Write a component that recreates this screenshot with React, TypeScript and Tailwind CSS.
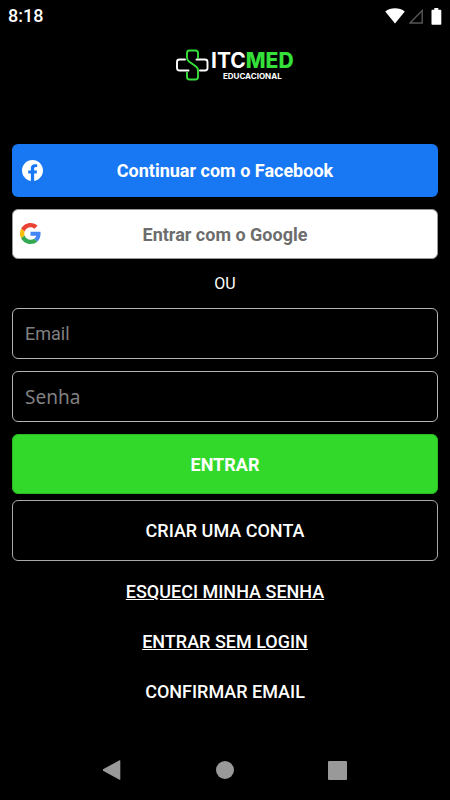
import React from "react";

const fieldClass =
  "block w-full h-[51px] rounded-md border border-[#b4b4b4] bg-black px-3 text-white outline-none placeholder:text-[#808080] placeholder:opacity-100";

function StatusBar() {
  return (
    <div className="flex h-8 items-center justify-between px-2">
      <span className="text-lg leading-8 font-medium">8:18</span>
      <div className="flex items-center">
        <svg width="20" height="16" viewBox="0 0 20 16" fill="#fff" aria-hidden="true">
          <path d="M10 15.5 0.2 3.6C5.5-0.8 14.500-0.8 19.800 3.600Z" />
        </svg>
        <svg className="ml-1" width="14" height="15" viewBox="0 0 14 15" fill="none" stroke="#555" strokeWidth="1.400" aria-hidden="true">
          <path d="M13.200 1.500V14H1Z" />
        </svg>
        <svg className="ml-2" width="11" height="17" viewBox="0 0 11 17" fill="#fff" aria-hidden="true">
          <path d="M3.300 0h4v1.800H9.500q.8 0 .8.8V16q0 .8-.8.8H1.300q-.8 0-.8-.8V2.600q0-.8.800-.8h2Z" />
        </svg>
      </div>
    </div>
  );
}

function Logo() {
  return (
    <div className="flex h-8 w-[120px] items-center gap-[2px] font-['Inter',sans-serif]">
      <svg className="shrink-0" width="34" height="32" viewBox="0 0 34 32" fill="none" strokeWidth="1.900" strokeLinecap="round" strokeLinejoin="round" aria-hidden="true">
        <path stroke="#fff" d="M10 10.500H4.500Q2 10.500 2 13V19Q2 21.500 4.500 21.500H13.500" />
        <path stroke="#fff" d="M21.500 10.500H30Q32.500 10.500 32.500 13V19Q32.500 21.500 30 21.500H25" />
        <path stroke="#35e03a" d="M23 9V4Q23 1.500 20.500 1.500H14.500Q12 1.500 12 4V8.500Q12 11 14 12.500L21 17.500Q23 19 23 21.500V28Q23 30.500 20.500 30.500H14.500Q12 30.500 12 28V23.500" />
      </svg>
      <div className="flex flex-col items-center pt-[2px]">
        <span className="text-[21px] leading-5 font-bold">
          ITC<span className="font-extrabold text-[#35e03a]">MED</span>
        </span>
        <span className="text-[8px] leading-[10px] font-bold">EDUCACIONAL</span>
      </div>
    </div>
  );
}

function FacebookIcon() {
  return (
    <svg className="absolute left-[10px] top-4" width="21" height="21" viewBox="0 0 24 24" fill="#fff" aria-hidden="true">
      <path d="M24 12.073c0-6.627-5.373-12-12-12s-12 5.373-12 12c0 5.990 4.388 10.954 10.125 11.854v-8.385H7.078v-3.470h3.047V9.430c0-3.007 1.792-4.669 4.533-4.669 1.312 0 2.686.235 2.686.235v2.953H15.830c-1.491 0-1.956.925-1.956 1.874v2.250h3.328l-.532 3.470h-2.796v8.385C19.612 23.027 24 18.062 24 12.073z" />
    </svg>
  );
}

function GoogleIcon() {
  return (
    <svg className="absolute left-[7px] top-[13px]" width="21" height="21" viewBox="0 0 48 48" aria-hidden="true">
      <path fill="#EA4335" d="M24 9.500c3.540 0 6.710 1.220 9.210 3.600l6.850-6.850C35.900 2.380 30.470 0 24 0 14.620 0 6.510 5.380 2.560 13.220l7.980 6.190C12.430 13.720 17.740 9.500 24 9.500z" />
      <path fill="#4285F4" d="M46.980 24.550c0-1.570-.15-3.090-.38-4.550H24v9.020h12.940c-.58 2.960-2.260 5.480-4.780 7.180l7.730 6c4.510-4.180 7.090-10.360 7.090-17.650z" />
      <path fill="#FBBC05" d="M10.530 28.590c-.48-1.450-.76-2.990-.76-4.590s.27-3.140.76-4.590l-7.980-6.190C.92 16.460 0 20.120 0 24c0 3.880.92 7.540 2.560 10.780l7.970-6.190z" />
      <path fill="#34A853" d="M24 48c6.480 0 11.930-2.130 15.890-5.810l-7.730-6c-2.150 1.450-4.920 2.300-8.160 2.300-6.260 0-11.570-4.220-13.470-9.910l-7.980 6.190C6.510 42.620 14.620 48 24 48z" />
    </svg>
  );
}

function NavigationBar() {
  return (
    <nav className="mt-auto flex h-[60px] items-center justify-center gap-[92px]">
      <button type="button" aria-label="Voltar" className="flex w-5 justify-center">
        <svg width="20" height="20" viewBox="0 0 20 20" fill="#999">
          <path d="M16.500.3q.8-.4.800.5v18.400q0 .9-.8.500L-.3 10.500q-.9-.5 0-1Z" />
        </svg>
      </button>
      <button type="button" aria-label="Início" className="flex w-5 justify-center">
        <span className="size-[18px] rounded-full bg-[#999]" />
      </button>
      <button type="button" aria-label="Recentes" className="flex w-5 justify-center">
        <span className="size-[19px] rounded-[1px] bg-[#999]" />
      </button>
    </nav>
  );
}

export default function App() {
  return (
    <div className="flex min-h-screen flex-col bg-black font-['Roboto',sans-serif] text-white">
      <StatusBar />
      <main className="flex flex-col px-3">
        <header className="flex h-28 justify-center pt-[17px] pl-5">
          <Logo />
        </header>

        <button type="button" className="relative h-[53px] rounded-md bg-[#1877f2] pt-px text-lg font-bold">
          <FacebookIcon />
          Continuar com o Facebook
        </button>
        <button type="button" className="relative mt-3 h-[50px] rounded-md border border-[#999] bg-white pt-px text-lg font-bold text-[#6d6d6d]">
          <GoogleIcon />
          Entrar com o Google
        </button>

        <p className="h-[49px] text-center text-base leading-[50px]">OU</p>

        <form className="flex flex-col" onSubmit={(e) => e.preventDefault()}>
          <input aria-label="Email" type="email" placeholder="Email" className={`${fieldClass} text-lg`} />
          <input aria-label="Senha" type="password" placeholder="Senha" className={`${fieldClass} mt-3 font-['Noto_Sans',sans-serif] text-[19px]`} />
          <button type="submit" className="mt-3 h-[60px] rounded-md border border-[#2bb823] bg-[#32d92a] pt-px text-lg font-bold">
            ENTRAR
          </button>
          <button type="button" className="mt-[6px] h-[61px] rounded-md border border-[#a8a8a8] text-lg font-medium">
            CRIAR UMA CONTA
          </button>
        </form>

        <div className="mt-[6px] flex flex-col items-center text-lg leading-[50px] font-medium">
          <a href="#senha" className="underline">ESQUECI MINHA SENHA</a>
          <a href="#entrar" className="underline">ENTRAR SEM LOGIN</a>
          <a href="#confirmar">CONFIRMAR EMAIL</a>
        </div>
      </main>
      <NavigationBar />
    </div>
  );
}
